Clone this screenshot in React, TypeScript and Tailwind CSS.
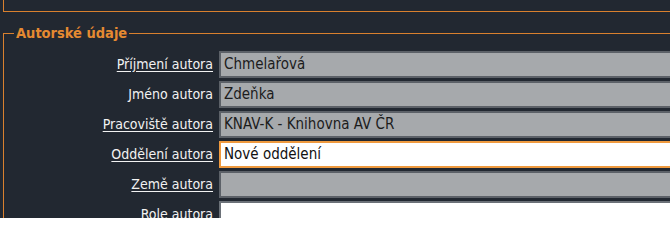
const rows = [
  { label: 'Příjmení autora', value: 'Chmelařová', link: true, kind: 'ro' },
  { label: 'Jméno autora', value: 'Zdeňka', link: false, kind: 'ro' },
  { label: 'Pracoviště autora', value: 'KNAV-K - Knihovna AV ČR', link: true, kind: 'ro' },
  { label: 'Oddělení autora', value: 'Nové oddělení', link: true, kind: 'focus' },
  { label: 'Země autora', value: '', link: true, kind: 'ro' },
  { label: 'Role autora', value: '', link: true, kind: 'edit' },
];

export default function App() {
  return (
    <div
      className="h-[218px] w-full overflow-hidden bg-[#222831] text-[14px] text-[#d9802e]"
      style={{ fontFamily: '"DejaVu Sans Condensed", "DejaVu Sans", sans-serif' }}
    >
      <div className="w-[1000px]">
        {/* tail of the previous section */}
        <div className="ml-[3px] h-[12px] border-x border-b border-solid border-[#d9802e]" />

        <fieldset className="ml-[3px] mt-[13px] border border-solid border-[#d9802e] pb-4">
          <legend className="ml-[10px] px-[2px] text-[14.5px] font-bold leading-[16px] text-[#e58a31]">
            Autorské údaje
          </legend>

          <div className="mt-[10px] flex flex-col gap-[3px]">
            {rows.map((r) => (
              <div key={r.label} className="flex items-center">
                <div className="w-[215px] shrink-0 pr-[6px] text-right text-[#f2f2f2]">
                  <span className={r.link ? 'underline underline-offset-2' : ''}>{r.label}</span>
                </div>
                <div
                  className={
                    r.kind === 'focus'
                      ? 'flex h-[27px] w-[700px] items-center border-2 border-[#ef9a3f] bg-white pl-[3px] text-[15px] text-[#111]'
                      : r.kind === 'edit'
                        ? 'flex h-[27px] w-[700px] items-center border-2 border-[#6b7178] bg-white pl-[3px] text-[15px] text-[#111]'
                        : 'flex h-[27px] w-[700px] items-center border-2 border-[#5c6168] bg-[#a6a9ac] pl-[3px] text-[15px] text-[#1c1c1c]'
                  }
                >
                  {r.value}
                </div>
              </div>
            ))}
          </div>
        </fieldset>
      </div>
    </div>
  );
}
